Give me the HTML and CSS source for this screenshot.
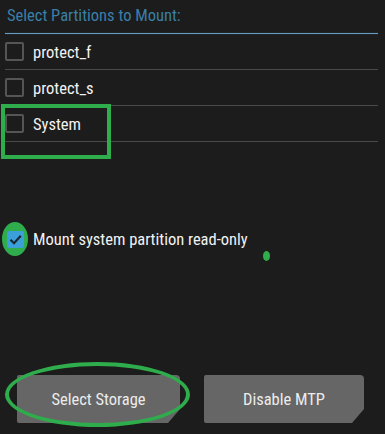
FILE: index.html
```html
<!DOCTYPE html>
<html>
<head>
<meta charset="utf-8">
<link rel="stylesheet" href="styles.css">
</head>
<body>
<div class="screen">
  <div class="title">Select Partitions to Mount:</div>
  <div class="title-rule"></div>
  <div class="list">
    <div class="row"><span class="box"></span><span class="label">protect_f</span></div>
    <div class="row"><span class="box"></span><span class="label">protect_s</span></div>
    <div class="row"><span class="box"></span><span class="label">System</span></div>
    <div class="mark-rect"></div>
  </div>
  <div class="mount">
    <span class="ring"></span>
    <span class="box checked">
      <svg width="17" height="17" viewBox="0 0 17 17"><path d="M3.5 8.8 L7 12.2 L13.8 4.8" fill="none" stroke="#1a2836" stroke-width="2.2"/></svg>
    </span>
    <span class="label">Mount system partition read-only</span>
    <span class="dot"></span>
  </div>
  <div class="buttons">
    <div class="btn">Select Storage</div>
    <div class="btn">Disable MTP</div>
    <div class="mark-ellipse"></div>
  </div>
</div>
</body>
</html>
```
FILE: styles.css
```css
html, body {
  margin: 0;
  padding: 0;
  background: #1c1c1c;
}
.screen {
  position: relative;
  width: 385px;
  height: 434px;
  display: flex;
  flex-direction: column;
  font-family: "Roboto Condensed", Roboto, sans-serif;
  color: #ececec;
  overflow: hidden;
}
.title {
  height: 33px;
  box-sizing: border-box;
  padding: 6px 0 0 7px;
  font-size: 16.5px;
  line-height: 20px;
  color: #3a7fa8;
}
.title-rule {
  height: 1px;
  margin: 0 7px 0 5px;
  background: #6a9cc0;
  box-shadow: 0 0 1px #3a6f95;
}
.list {
  position: relative;
  margin: 0 7px 0 5px;
}
.row {
  height: 35px;
  border-bottom: 1px solid #4a4a4a;
  display: flex;
  align-items: center;
  gap: 9px;
}
.row .label {
  padding-top: 2px;
}
.box {
  width: 19px;
  height: 19px;
  box-sizing: border-box;
  border: 2px solid #555;
  border-radius: 2px;
  flex: none;
}
.label {
  font-size: 16.5px;
  color: #f2f2f2;
}
.mark-rect {
  position: absolute;
  left: -4px;
  top: 70px;
  width: 110px;
  height: 55px;
  box-sizing: border-box;
  border: 4px solid #2fac4c;
}
.mount {
  position: relative;
  margin-top: 83px;
  height: 28px;
  display: flex;
  align-items: center;
  padding-left: 7px;
  gap: 9px;
}
.box.checked {
  width: 17px;
  height: 17px;
  border: none;
  background: #3b9fd9;
  position: relative;
  z-index: 1;
  display: flex;
}
.ring {
  position: absolute;
  left: 2px;
  top: -3px;
  width: 26px;
  height: 34px;
  border-radius: 50%;
  background: #2fac4c;
}
.dot {
  position: absolute;
  left: 263px;
  top: 26px;
  width: 7px;
  height: 10px;
  border-radius: 50%;
  background: #2fac4c;
}
.buttons {
  position: relative;
  margin-top: auto;
  margin-bottom: 11px;
  display: flex;
  gap: 24px;
  padding-left: 17px;
}
.btn {
  width: 163px;
  height: 48px;
  background: #666;
  color: #ececec;
  font-size: 16.5px;
  display: flex;
  align-items: center;
  justify-content: center;
  border-radius: 2px 4px 0 2px;
  clip-path: polygon(0 0, 100% 0, 100% calc(100% - 14px), calc(100% - 12px) 100%, 0 100%);
}
.btn + .btn {
  width: 160px;
}
.mark-ellipse {
  position: absolute;
  left: 5px;
  top: -13px;
  width: 185px;
  height: 65px;
  box-sizing: border-box;
  border: 4px solid #2fac4c;
  border-radius: 50%;
}
```
